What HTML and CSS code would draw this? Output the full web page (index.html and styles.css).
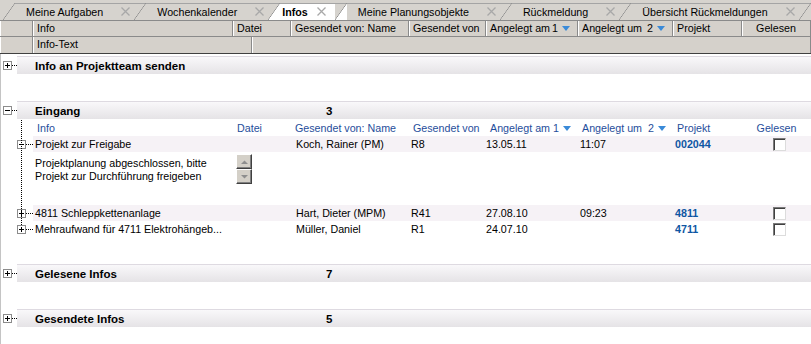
FILE: index.html
```html
<!DOCTYPE html>
<html lang="de">
  <head>
    <meta charset="UTF-8" />
    <title>Infos</title>
    <link rel="stylesheet" href="styles.css">
  </head>
  <body>
    <div class="tabs">
      <div class="tab"><span>Meine Aufgaben</span><svg class="close" width="9" height="9"><path d="M0.5 0.5l8 8M8.5 0.5l-8 8" /></svg></div>
      <div class="tab"><span>Wochenkalender</span><svg class="close" width="9" height="9"><path d="M0.5 0.5l8 8M8.5 0.5l-8 8" /></svg></div>
      <div class="tab active"><span>Infos</span><svg class="close" width="9" height="9"><path d="M0.5 0.5l8 8M8.5 0.5l-8 8" /></svg></div>
      <div class="tab"><span>Meine Planungsobjekte</span><svg class="close" width="9" height="9"><path d="M0.5 0.5l8 8M8.5 0.5l-8 8" /></svg></div>
      <div class="tab"><span>Rückmeldung</span><svg class="close" width="9" height="9"><path d="M0.5 0.5l8 8M8.5 0.5l-8 8" /></svg></div>
      <div class="tab"><span>Übersicht Rückmeldungen</span><svg class="close" width="9" height="9"><path d="M0.5 0.5l8 8M8.5 0.5l-8 8" /></svg></div>
      <div class="tab tab-end"></div>
    </div>

    <div class="head">
      <div class="head-row head-cols">
        <div class="hcell"></div>
        <div class="hcell">Info</div>
        <div class="hcell">Datei</div>
        <div class="hcell">Gesendet von: Name</div>
        <div class="hcell">Gesendet von</div>
        <div class="hcell sort"><span>Angelegt am</span><span>1 <i class="arrow"></i></span></div>
        <div class="hcell sort"><span>Angelegt um</span><span>2 <i class="arrow"></i></span></div>
        <div class="hcell">Projekt</div>
        <div class="hcell center">Gelesen</div>
      </div>
      <div class="head-row head-cols2">
        <div class="hcell"></div>
        <div class="hcell">Info-Text</div>
        <div class="hcell"></div>
      </div>
    </div>

    <div class="tree">
      <div class="group">
        <div class="group-head">
          <svg class="tg" width="9" height="9"><rect x="0.5" y="0.5" width="8" height="8" /><path d="M2 4.5h5M4.5 2v5" /></svg>
          <span class="dots"></span>
          <div class="band"><span class="band-label">Info an Projektteam senden</span></div>
        </div>
      </div>

      <div class="group">
        <div class="group-head">
          <svg class="tg" width="9" height="9"><rect x="0.5" y="0.5" width="8" height="8" /><path d="M2 4.5h5" /></svg>
          <span class="dots"></span>
          <div class="band"><span class="band-label">Eingang</span><span>3</span></div>
        </div>
        <div class="group-body">
          <div class="cols col-head">
            <div>Info</div>
            <div>Datei</div>
            <div>Gesendet von: Name</div>
            <div>Gesendet von</div>
            <div class="sort"><span>Angelegt am</span><span>1 <i class="arrow"></i></span></div>
            <div class="sort"><span>Angelegt um</span><span>2 <i class="arrow"></i></span></div>
            <div>Projekt</div>
            <div class="center">Gelesen</div>
          </div>

          <div class="item">
            <svg class="tg" width="9" height="9"><rect x="0.5" y="0.5" width="8" height="8" /><path d="M2 4.5h5" /></svg>
            <span class="dots row-dots"></span>
            <div class="cols row">
              <div>Projekt zur Freigabe</div>
              <div></div>
              <div class="name">Koch, Rainer (PM)</div>
              <div>R8</div>
              <div class="date">13.05.11</div>
              <div>11:07</div>
              <div class="proj">002044</div>
              <div class="center"><span class="chk"></span></div>
            </div>
          </div>
          <div class="detail">
            <div class="detail-text">
              Projektplanung abgeschlossen, bitte<br>
              Projekt zur Durchführung freigeben
            </div>
            <div class="scroll">
              <div class="sbtn"><svg width="7" height="4"><path d="M0 4h7L3.5 0.5z" /></svg></div>
              <div class="sbtn"><svg width="7" height="4"><path d="M0 0h7L3.5 3.5z" /></svg></div>
            </div>
          </div>

          <div class="item">
            <svg class="tg" width="9" height="9"><rect x="0.5" y="0.5" width="8" height="8" /><path d="M2 4.5h5M4.5 2v5" /></svg>
            <span class="dots row-dots"></span>
            <div class="cols row">
              <div>4811 Schleppkettenanlage</div>
              <div></div>
              <div class="name">Hart, Dieter (MPM)</div>
              <div>R41</div>
              <div class="date">27.08.10</div>
              <div>09:23</div>
              <div class="proj">4811</div>
              <div class="center"><span class="chk"></span></div>
            </div>
          </div>
          <div class="item">
            <svg class="tg" width="9" height="9"><rect x="0.5" y="0.5" width="8" height="8" /><path d="M2 4.5h5M4.5 2v5" /></svg>
            <span class="dots row-dots"></span>
            <div class="cols row plain">
              <div>Mehraufwand für 4711 Elektrohängeb...</div>
              <div></div>
              <div class="name">Müller, Daniel</div>
              <div>R1</div>
              <div class="date">24.07.10</div>
              <div></div>
              <div class="proj">4711</div>
              <div class="center"><span class="chk"></span></div>
            </div>
          </div>
        </div>
      </div>

      <div class="group">
        <div class="group-head">
          <svg class="tg" width="9" height="9"><rect x="0.5" y="0.5" width="8" height="8" /><path d="M2 4.5h5M4.5 2v5" /></svg>
          <span class="dots"></span>
          <div class="band"><span class="band-label">Gelesene Infos</span><span>7</span></div>
        </div>
      </div>

      <div class="group">
        <div class="group-head">
          <svg class="tg" width="9" height="9"><rect x="0.5" y="0.5" width="8" height="8" /><path d="M2 4.5h5M4.5 2v5" /></svg>
          <span class="dots"></span>
          <div class="band"><span class="band-label">Gesendete Infos</span><span>5</span></div>
        </div>
      </div>
    </div>
  </body>
</html>
```

FILE: styles.css
```css
body {
  margin: 0;
  font-family: "Liberation Sans", Arial, sans-serif;
  font-size: 10.7px;
  color: #000;
  background-color: #fff;
  height: 344px;
  overflow: hidden;
}

/* tab strip */
.tabs {
  display: flex;
  height: 21px;
  padding-left: 3px;
  background-color: #d6d3ce;
  border-bottom: 1px solid #8a8a8a;
  box-sizing: border-box;
}
.tab {
  position: relative;
  display: flex;
  align-items: center;
  gap: 18px;
  height: 17px;
  margin-top: 3px;
  padding: 0 4px 0 23px;
  white-space: nowrap;
}
.tab::before {
  content: "";
  position: absolute;
  left: 0;
  top: 0;
  width: 12px;
  height: 17px;
  background: linear-gradient(to bottom right, transparent calc(50% - 0.6px), #8c8c8c 50%, transparent calc(50% + 0.6px));
}
.tab::after {
  content: "";
  position: absolute;
  left: 12px;
  right: -12px;
  top: 0;
  border-top: 1px solid #a4a4a4;
}
.tab.active {
  gap: 9px;
  padding: 0 9px 0 14px;
  font-weight: bold;
  background: linear-gradient(#fff, #fff) no-repeat 12px 0 / calc(100% - 12px) 100%;
}
.tab.active::before,
.tab.active + .tab::before {
  background: linear-gradient(to bottom right, transparent calc(50% - 0.6px), #8c8c8c 50%, #fff calc(50% + 0.6px));
}
.tab-end::after {
  display: none;
}
.close {
  stroke: #a8a8a8;
  stroke-width: 1.3;
}

/* column header */
.head {
  background-color: #d5d1cb;
  border-bottom: 1px solid #404040;
}
.head-row {
  display: grid;
  height: 16px;
  border-bottom: 1px solid #8a8a8a;
  box-sizing: border-box;
}
.head-row:last-child {
  border-bottom: none;
}
.head-cols {
  grid-template-columns: 33px 200px 58px 118px 77px 92px 95px 69px 1fr;
}
.head-cols2 {
  grid-template-columns: 33px 219px 1fr;
}
.hcell {
  padding: 0 4px;
  line-height: 15px;
  white-space: nowrap;
  overflow: hidden;
  border-right: 1px solid #8a8a8a;
  box-shadow: inset 1px 0 #fff;
}
.sort {
  display: flex;
  justify-content: space-between;
  padding-right: 7px;
}
.center {
  text-align: center;
}
.arrow {
  display: inline-block;
  width: 0;
  height: 0;
  margin-left: 1px;
  border-left: 4px solid transparent;
  border-right: 4px solid transparent;
  border-top: 5px solid #3a8ad8;
  vertical-align: 1px;
}

/* tree */
.tree {
  border-left: 1px solid #c4c4c4;
  padding-top: 2px;
  min-height: 300px;
}
.group {
  padding-bottom: 27px;
}
.group-head {
  display: flex;
  align-items: center;
}
.tg {
  flex: none;
  margin-left: 2px;
}
.tg rect {
  fill: #fff;
  stroke: #8c8c8c;
}
.tg path {
  stroke: #000;
}
.dots {
  width: 5px;
  border-top: 1px dotted #000;
}
.band {
  flex: 1;
  display: flex;
  height: 18px;
  align-items: center;
  padding: 1px 0 0 18px;
  box-sizing: border-box;
  font-size: 11.5px;
  font-weight: bold;
  background: linear-gradient(#f9f8fa, #e5e3e6);
  border-top: 1px solid #dedae1;
}
.band-label {
  width: 291px;
}

.group-body {
  position: relative;
}
.group-body::before {
  content: "";
  position: absolute;
  left: 20px;
  top: 0;
  bottom: 12px;
  border-left: 1px dotted #000;
}
.cols {
  display: grid;
  grid-template-columns: 200px 58px 118px 77px 92px 95px 69px 1fr;
  height: 16px;
  align-items: center;
  white-space: nowrap;
}
.col-head {
  margin: 1px 0 0 32px;
  color: #1f4e9b;
}
.col-head > div {
  padding: 0 4px;
}
.col-head .sort {
  padding-right: 7px;
}
.item {
  display: flex;
  align-items: center;
}
.item .tg {
  margin-left: 16px;
}
.row-dots {
  width: 7px;
}
.row {
  flex: 1;
  background-color: #f6f2f6;
}
.row.plain {
  background-color: #fff;
}
.row > div {
  padding: 0 2px;
}
.row .name {
  padding-left: 5px;
}
.row .date {
  padding-left: 0;
}
.proj {
  font-weight: bold;
  color: #0f56a3;
}
.chk {
  display: inline-block;
  width: 11px;
  height: 11px;
  margin-top: 1px;
  margin-left: 6px;
  background-color: #fff;
  border: 1px solid;
  border-color: #7a7a7a #dcdcdc #dcdcdc #7a7a7a;
  box-shadow: inset 1px 1px #404040;
  vertical-align: middle;
}

/* expanded info text */
.detail {
  display: flex;
  padding: 2px 0 21px 34px;
}
.detail-text {
  width: 201px;
  padding-top: 3px;
  line-height: 13px;
}
.sbtn {
  display: flex;
  align-items: center;
  justify-content: center;
  width: 14px;
  height: 13px;
  background-color: #d4d0c8;
  border: 1px solid;
  border-color: #fff #404040 #404040 #fff;
  box-shadow: inset -1px -1px #808080;
}
.sbtn svg {
  fill: #8e8e8e;
}
```
